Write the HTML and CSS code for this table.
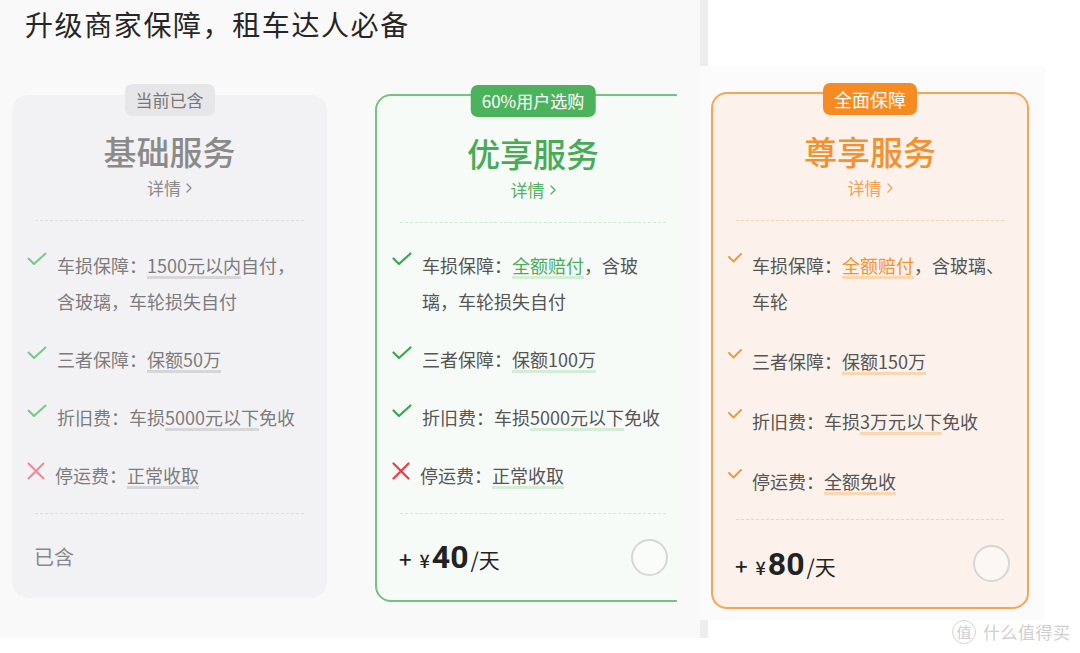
FILE: index.html
```html
<!DOCTYPE html>
<html lang="zh-CN">
<head>
<meta charset="utf-8">
<title>升级商家保障</title>
<link rel="stylesheet" href="styles.css">
</head>
<body>
<div class="page">
  <section class="left">
    <h1 class="headline">升级商家保障，租车达人必备</h1>
    <div class="cards">
      <div class="card card--base">
        <span class="badge">当前已含</span>
        <div class="card__name">基础服务</div>
        <div class="card__more">详情<svg class="chev" viewBox="0 0 6 10" width="6" height="10"><path d="M1 1 L5 5 L1 9" fill="none" stroke="currentColor" stroke-width="1.3" stroke-linecap="round" stroke-linejoin="round"/></svg></div>
        <div class="card__sep"></div>
        <ul class="feats">
          <li class="feat"><svg class="ico ico--check" viewBox="0 0 20 14" width="20" height="14"><polyline points="1.5,6.5 7,12 18.5,1.5" fill="none" stroke="currentColor" stroke-width="2" stroke-linecap="round" stroke-linejoin="round"/></svg><p class="feat__text">车损保障：<span class="hl">1500元以内</span>自付，<br>含玻璃，车轮损失自付</p></li>
          <li class="feat"><svg class="ico ico--check" viewBox="0 0 20 14" width="20" height="14"><polyline points="1.5,6.5 7,12 18.5,1.5" fill="none" stroke="currentColor" stroke-width="2" stroke-linecap="round" stroke-linejoin="round"/></svg><p class="feat__text">三者保障：<span class="hl">保额50万</span></p></li>
          <li class="feat"><svg class="ico ico--check" viewBox="0 0 20 14" width="20" height="14"><polyline points="1.5,6.5 7,12 18.5,1.5" fill="none" stroke="currentColor" stroke-width="2" stroke-linecap="round" stroke-linejoin="round"/></svg><p class="feat__text">折旧费：车损<span class="hl">5000元以下</span>免收</p></li>
          <li class="feat"><svg class="ico ico--cross" viewBox="0 0 18 18" width="18" height="18"><path d="M1.5 1.5 L16.5 16.5 M16.5 1.5 L1.5 16.5" fill="none" stroke="currentColor" stroke-width="2" stroke-linecap="round"/></svg><p class="feat__text">停运费：<span class="hl">正常收取</span></p></li>
        </ul>
        <div class="card__sep card__sep--bottom"></div>
        <div class="card__foot"><span class="included">已含</span></div>
      </div>

      <div class="clip">
        <div class="card card--plus">
          <span class="badge">60%用户选购</span>
          <div class="card__name">优享服务</div>
          <div class="card__more">详情<svg class="chev" viewBox="0 0 6 10" width="6" height="10"><path d="M1 1 L5 5 L1 9" fill="none" stroke="currentColor" stroke-width="1.3" stroke-linecap="round" stroke-linejoin="round"/></svg></div>
          <div class="card__sep"></div>
          <ul class="feats">
            <li class="feat"><svg class="ico ico--check" viewBox="0 0 20 14" width="20" height="14"><polyline points="1.5,6.5 7,12 18.5,1.5" fill="none" stroke="currentColor" stroke-width="2.2" stroke-linecap="round" stroke-linejoin="round"/></svg><p class="feat__text">车损保障：<span class="hl hl--strong">全额赔付</span>，含玻<br>璃，车轮损失自付</p></li>
            <li class="feat"><svg class="ico ico--check" viewBox="0 0 20 14" width="20" height="14"><polyline points="1.5,6.5 7,12 18.5,1.5" fill="none" stroke="currentColor" stroke-width="2.2" stroke-linecap="round" stroke-linejoin="round"/></svg><p class="feat__text">三者保障：<span class="hl">保额100万</span></p></li>
            <li class="feat"><svg class="ico ico--check" viewBox="0 0 20 14" width="20" height="14"><polyline points="1.5,6.5 7,12 18.5,1.5" fill="none" stroke="currentColor" stroke-width="2.2" stroke-linecap="round" stroke-linejoin="round"/></svg><p class="feat__text">折旧费：车损<span class="hl">5000元以下</span>免收</p></li>
            <li class="feat"><svg class="ico ico--cross" viewBox="0 0 18 18" width="18" height="18"><path d="M1.5 1.5 L16.5 16.5 M16.5 1.5 L1.5 16.5" fill="none" stroke="currentColor" stroke-width="2.2" stroke-linecap="round"/></svg><p class="feat__text">停运费：<span class="hl">正常收取</span></p></li>
          </ul>
          <div class="card__sep card__sep--bottom"></div>
          <div class="card__foot">
            <div class="price"><span class="price__plus">+</span><span class="price__cur">¥</span><span class="price__num">40</span><span class="price__unit">/天</span></div>
            <span class="radio"></span>
          </div>
        </div>
      </div>
    </div>
  </section>

  <div class="right">
    <div class="right__top"><span class="strip strip--top"></span></div>
    <div class="right__panel">
      <div class="card card--vip">
        <span class="badge">全面保障</span>
        <div class="card__name">尊享服务</div>
        <div class="card__more">详情<svg class="chev" viewBox="0 0 6 10" width="6" height="10"><path d="M1 1 L5 5 L1 9" fill="none" stroke="currentColor" stroke-width="1.3" stroke-linecap="round" stroke-linejoin="round"/></svg></div>
        <div class="card__sep"></div>
        <ul class="feats">
          <li class="feat"><svg class="ico ico--small" viewBox="0 0 14 10" width="14" height="10"><polyline points="1,4 5.5,8.5 13,1" fill="none" stroke="currentColor" stroke-width="2" stroke-linecap="round" stroke-linejoin="round"/></svg><p class="feat__text">车损保障：<span class="hl hl--strong">全额赔付</span>，含玻璃、<br>车轮</p></li>
          <li class="feat"><svg class="ico ico--small" viewBox="0 0 14 10" width="14" height="10"><polyline points="1,4 5.5,8.5 13,1" fill="none" stroke="currentColor" stroke-width="2" stroke-linecap="round" stroke-linejoin="round"/></svg><p class="feat__text">三者保障：<span class="hl">保额150万</span></p></li>
          <li class="feat"><svg class="ico ico--small" viewBox="0 0 14 10" width="14" height="10"><polyline points="1,4 5.5,8.5 13,1" fill="none" stroke="currentColor" stroke-width="2" stroke-linecap="round" stroke-linejoin="round"/></svg><p class="feat__text">折旧费：车损<span class="hl">3万元以下</span>免收</p></li>
          <li class="feat"><svg class="ico ico--small" viewBox="0 0 14 10" width="14" height="10"><polyline points="1,4 5.5,8.5 13,1" fill="none" stroke="currentColor" stroke-width="2" stroke-linecap="round" stroke-linejoin="round"/></svg><p class="feat__text">停运费：<span class="hl">全额免收</span></p></li>
        </ul>
        <div class="card__sep card__sep--bottom"></div>
        <div class="card__foot">
          <div class="price"><span class="price__plus">+</span><span class="price__cur">¥</span><span class="price__num">80</span><span class="price__unit">/天</span></div>
          <span class="radio"></span>
        </div>
      </div>
    </div>
    <div class="right__bottom"><span class="strip strip--bottom"></span></div>
  </div>

  <div class="watermark"><span class="watermark__logo">值</span><span class="watermark__text">什么值得买</span></div>
</div>
</body>
</html>
```

FILE: styles.css
```css
* { box-sizing: border-box; }

html, body {
  margin: 0;
  padding: 0;
  background: #ffffff;
}

body {
  font-family: "Noto Sans CJK SC", "Noto Sans", sans-serif;
  color: #333;
}

.page {
  position: relative;
  width: 1080px;
  height: 653px;
  display: flex;
  align-items: flex-start;
  overflow: hidden;
}

/* ---------- left screenshot ---------- */
.left {
  width: 700px;
  height: 638px;
  background: #f9f9f9;
  flex: none;
}

.headline {
  margin: 0;
  padding: 6px 0 0 25px;
  font-size: 28px;
  line-height: 36px;
  font-weight: 400;
  letter-spacing: 1.6px;
  color: #262626;
}

.cards {
  display: flex;
  align-items: flex-start;
  margin-top: 53px;
  padding-left: 12px;
}

.clip {
  width: 350px;
  overflow: hidden;
  padding: 14px 0 4px 48px;
  margin-top: -15px;
}

/* ---------- cards ---------- */
.card {
  position: relative;
  display: flex;
  flex-direction: column;
  border-radius: 16px;
  padding-top: 36px;
  flex: none;
}

.card--base {
  width: 315px;
  background: #f2f2f4;
}

.card--plus {
  width: 316px;
  background: #f7fbf7;
  border: 2px solid #72c47e;
  padding-top: 37px;
}

.card--vip {
  width: 318px;
  background: #fcf2eb;
  border: 2px solid #f6a551;
  padding-top: 37px;
}

.badge {
  position: absolute;
  top: -11px;
  left: 50%;
  transform: translateX(-50%);
  height: 32px;
  line-height: 32px;
  padding: 0 11px;
  border-radius: 7px;
  font-size: 17px;
  white-space: nowrap;
}

.card--base .badge { background: #e6e6e8; color: #777; }
.card--plus .badge { background: #4db25c; color: #fff; }
.card--vip .badge { background: #f68b24; color: #fff; font-size: 18px; }

.card__name {
  text-align: center;
  font-size: 33px;
  line-height: 40px;
  font-weight: 500;
}

.card--base .card__name { color: #8a8a8a; }
.card--plus .card__name { color: #47ab57; }
.card--vip .card__name { color: #f3912f; }

.card__more {
  margin-top: 5px;
  display: flex;
  justify-content: center;
  align-items: center;
  font-size: 17px;
  line-height: 24px;
}

.card--base .card__more { color: #8a8a8a; }
.card--plus .card__more { color: #55b062; }
.card--vip .card__more { color: #f0a356; }

.chev { margin-left: 5px; }

.card__sep {
  margin: 20px 23px 0;
  border-top: 1px dashed #dcdcdc;
}

.card--plus .card__sep { border-top-color: #cfe9d2; }
.card--vip .card__sep { border-top-color: #f8d3ae; }

/* ---------- features ---------- */
.feats {
  list-style: none;
  margin: 26px 0 0;
  padding: 0 0 0 15px;
}

.card--plus .feats { margin-top: 24px; }

.feat {
  display: flex;
  align-items: flex-start;
  gap: 10px;
}

.feat + .feat { margin-top: 22px; }
.card--vip .feat + .feat { margin-top: 24px; }

.feat__text {
  margin: 0;
  font-size: 18px;
  line-height: 36px;
  white-space: nowrap;
}

.card--base .feat__text { color: #7c7c7c; }
.card--plus .feat__text { color: #555; }
.card--vip .feat__text { color: #555; }

.ico { flex: none; margin-top: 5px; }
.ico--small { margin-top: 6px; }

.card--base .ico--check { color: #74ca84; }
.card--base .ico--cross { color: #f28792; }
.card--plus .ico--check { color: #3aa64e; }
.card--plus .ico--cross { color: #ee3c45; }
.card--vip .ico--small { color: #f49a3c; }

.hl {
  text-decoration: underline;
  text-decoration-thickness: 3px;
  text-underline-offset: 3px;
}

.card--base .hl { text-decoration-color: #d6d6d8; }
.card--plus .hl { text-decoration-color: #d3edd6; }
.card--vip .hl { text-decoration-color: #fad6b1; }

.card--plus .hl--strong { color: #4aae59; }
.card--vip .hl--strong { color: #f5932c; }

.card__sep--bottom { margin-top: 20px; }

/* ---------- footer ---------- */
.card__foot {
  display: flex;
  align-items: center;
  justify-content: space-between;
  padding: 0 23px 0 22px;
  height: 84px;
}

.card--plus .card__foot { height: 86px; padding-right: 21px; }
.card--vip .card__foot { height: 87px; padding-right: 17px; }

.included {
  font-size: 20px;
  color: #888;
}

.price {
  display: flex;
  align-items: baseline;
  color: #222;
}

.price__plus {
  font-size: 22px;
  font-weight: 500;
  margin-right: 8px;
}

.price__cur {
  font-size: 18px;
  font-weight: 500;
  margin-right: 2px;
}

.price__num {
  font-family: "Roboto", "Liberation Sans", sans-serif;
  font-size: 32px;
  font-weight: 700;
  line-height: 40px;
}

.price__unit {
  font-size: 21px;
  margin-left: 2px;
}

.radio {
  width: 37px;
  height: 37px;
  border-radius: 50%;
  border: 2px solid #d6d6d6;
  background: rgba(255, 255, 255, 0.4);
}

/* ---------- right screenshot ---------- */
.right {
  width: 345px;
  display: flex;
  flex-direction: column;
  flex: none;
}

.right__top,
.right__bottom {
  display: flex;
}

.strip {
  width: 8px;
  background: #ededed;
}

.strip--top { height: 66px; }
.strip--bottom { height: 18px; }

.right__panel {
  height: 554px;
  background: #fbfbfb;
  padding: 26px 0 0 11px;
}

/* ---------- watermark ---------- */
.watermark {
  position: absolute;
  left: 952px;
  top: 619px;
  display: flex;
  align-items: center;
  gap: 7px;
  color: #cfcfcf;
}

.watermark__logo {
  width: 24px;
  height: 24px;
  border-radius: 50%;
  border: 1.5px solid #d4d4d4;
  display: flex;
  align-items: center;
  justify-content: center;
  font-size: 15px;
  line-height: 1;
}

.watermark__text {
  font-size: 17px;
  letter-spacing: 0.5px;
}
```
